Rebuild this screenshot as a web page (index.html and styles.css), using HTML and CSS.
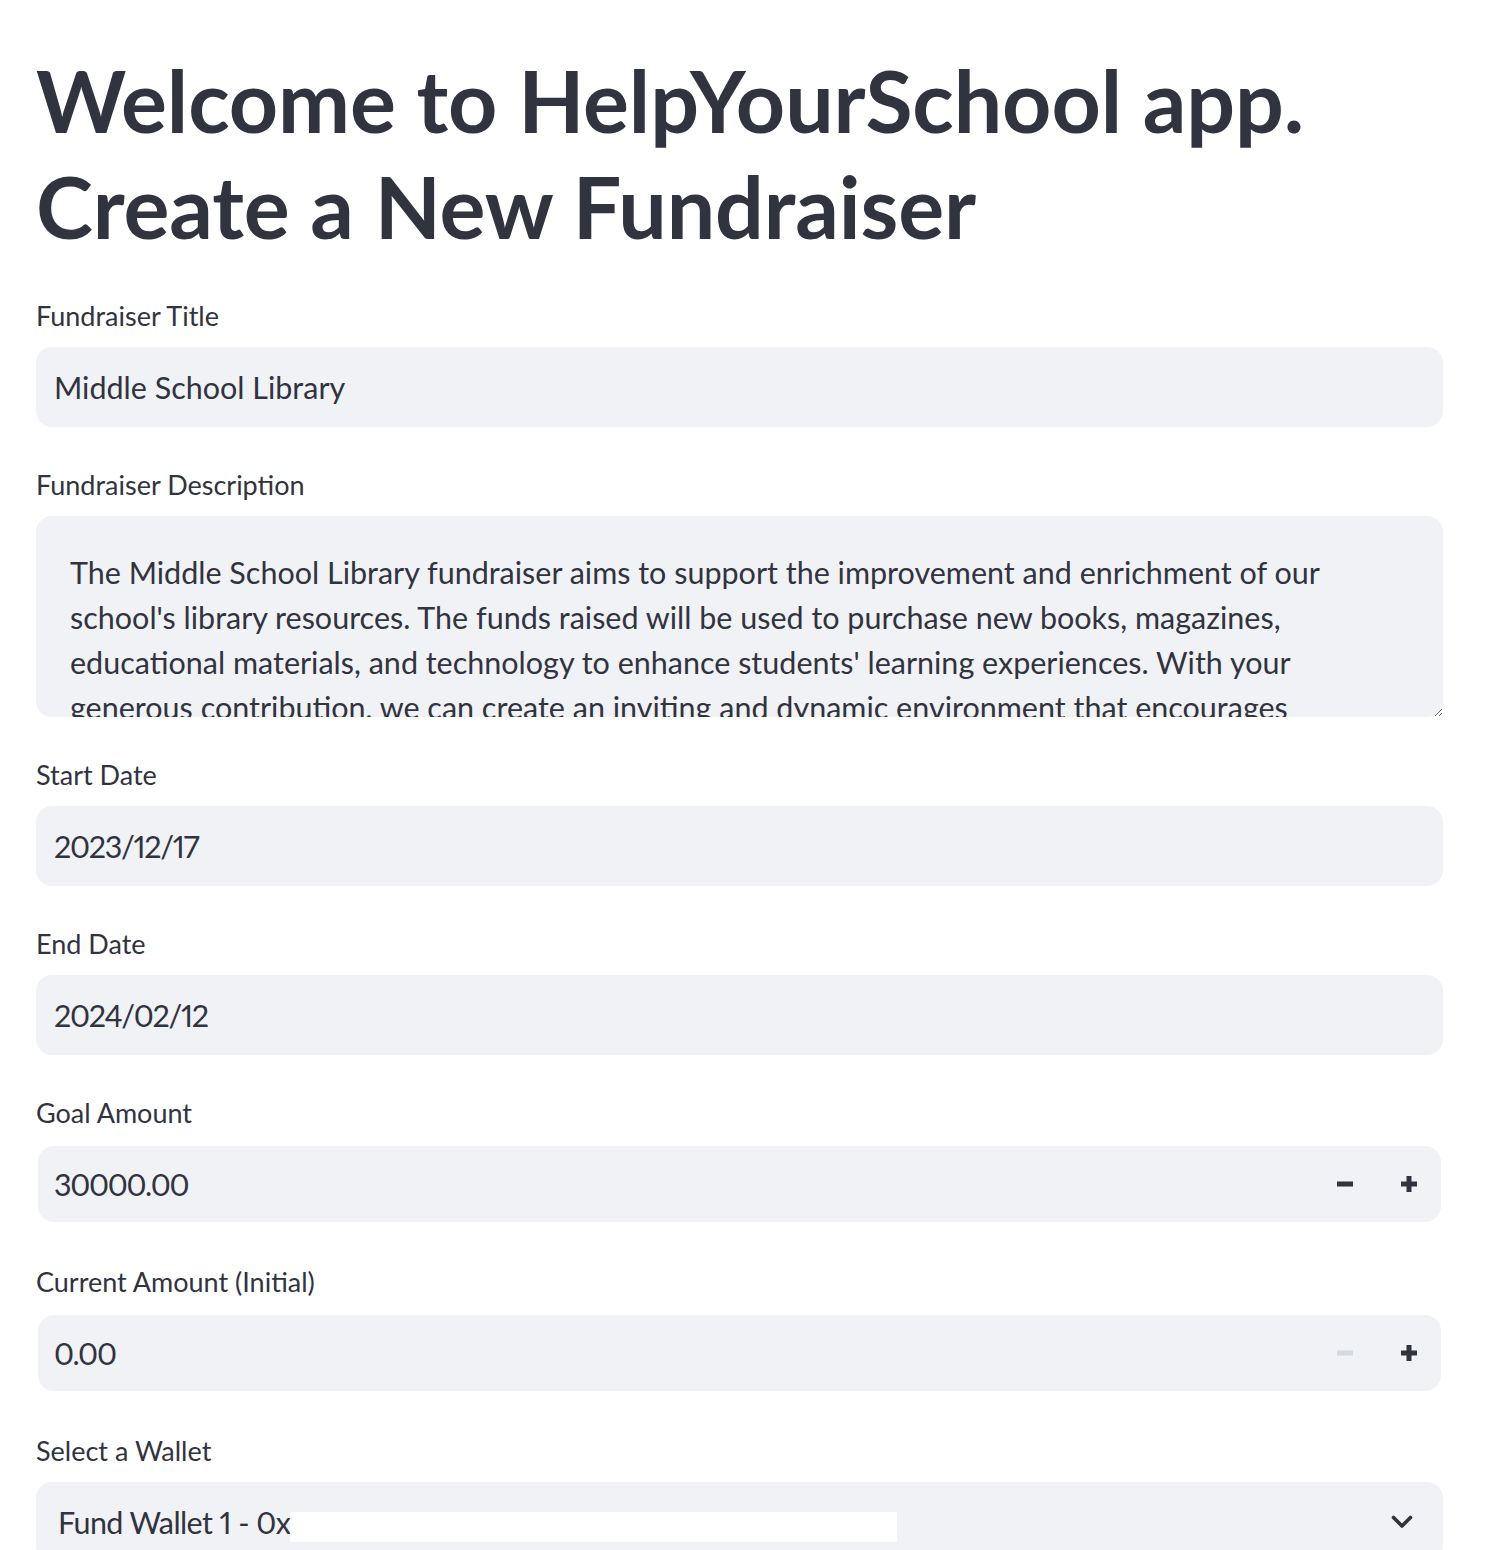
FILE: index.html
```html
<!DOCTYPE html>
<html lang="en">
  <head>
    <meta charset="UTF-8" />
    <meta name="viewport" content="width=device-width, initial-scale=1.0" />
    <title>HelpYourSchool - New Fundraiser</title>
    <link rel="stylesheet" href="styles.css">
  </head>
  <body>
    <div class="page">
      <h1 class="page-title">Welcome to HelpYourSchool app.<br>Create a New Fundraiser</h1>

      <div class="field">
        <label class="field-label" for="title">Fundraiser Title</label>
        <input class="text-input" id="title" type="text" value="Middle School Library">
      </div>

      <div class="field">
        <label class="field-label" for="desc">Fundraiser Description</label>
        <textarea class="text-area" id="desc">The Middle School Library fundraiser aims to support the improvement and enrichment of our school's library resources. The funds raised will be used to purchase new books, magazines, educational materials, and technology to enhance students' learning experiences. With your generous contribution, we can create an inviting and dynamic environment that encourages curiosity, creativity and a lifelong love of reading.</textarea>
      </div>

      <div class="field">
        <label class="field-label" for="start">Start Date</label>
        <input class="text-input digits" id="start" type="text" value="2023/12/17">
      </div>

      <div class="field">
        <label class="field-label" for="end">End Date</label>
        <input class="text-input digits" id="end" type="text" value="2024/02/12">
      </div>

      <div class="field">
        <label class="field-label" for="goal">Goal Amount</label>
        <div class="number-input">
          <input class="number-value digits" id="goal" type="text" value="30000.00">
          <button class="step-btn" type="button" aria-label="decrement">
            <svg width="16" height="16" viewBox="0 0 16 16"><rect x="0" y="5.5" width="16" height="5" /></svg>
          </button>
          <button class="step-btn" type="button" aria-label="increment">
            <svg width="16" height="16" viewBox="0 0 16 16"><rect x="0" y="5.5" width="16" height="5" /><rect x="5.5" y="0" width="5" height="16" /></svg>
          </button>
        </div>
      </div>

      <div class="field">
        <label class="field-label" for="current">Current Amount (Initial)</label>
        <div class="number-input">
          <input class="number-value digits" id="current" type="text" value="0.00">
          <button class="step-btn disabled" type="button" aria-label="decrement">
            <svg width="16" height="16" viewBox="0 0 16 16"><rect x="0" y="5.5" width="16" height="5" /></svg>
          </button>
          <button class="step-btn" type="button" aria-label="increment">
            <svg width="16" height="16" viewBox="0 0 16 16"><rect x="0" y="5.5" width="16" height="5" /><rect x="5.5" y="0" width="5" height="16" /></svg>
          </button>
        </div>
      </div>

      <div class="field">
        <label class="field-label">Select a Wallet</label>
        <div class="select-box">
          <span class="select-value"><span class="wallet-name">Fund Wallet 1 - 0x</span><span class="redacted"></span></span>
          <svg class="chevron" width="22" height="14" viewBox="0 0 22 14"><path d="M2.5 2.5 L11 11 L19.5 2.5" fill="none" stroke="#31333f" stroke-width="3.6" stroke-linecap="round" stroke-linejoin="round" /></svg>
        </div>
      </div>
    </div>
  </body>
</html>
```

FILE: styles.css
```css
* {
  box-sizing: border-box;
}

body {
  margin: 0;
  background: #ffffff;
  color: #31333f;
  font-family: "Lato", "Noto Sans", sans-serif;
}

.page {
  padding: 47px 43px 60px 36px;
}

.page-title {
  margin: 0 0 36px;
  font-size: 86px;
  font-weight: 700;
  line-height: 106px;
  letter-spacing: -0.1px;
  color: #31333f;
}

.field {
  display: flex;
  flex-direction: column;
  margin-bottom: 37px;
}

.field-label {
  font-size: 27px;
  line-height: 42px;
  margin-bottom: 10px;
}

.text-input {
  height: 80px;
  width: 100%;
  border: none;
  outline: none;
  border-radius: 16px;
  background: #f0f2f6;
  padding: 0 18px;
  font-family: inherit;
  font-size: 30.5px;
  color: #31333f;
}

.digits {
  font-variant-numeric: proportional-nums;
  letter-spacing: -1.3px;
}

.text-area {
  height: 201px;
  width: 100%;
  border: none;
  outline: none;
  border-radius: 16px;
  background: #f0f2f6;
  padding: 34px 34px 0;
  font-family: inherit;
  font-size: 30.5px;
  line-height: 45px;
  color: #31333f;
  overflow: hidden;
  resize: vertical;
}

.number-input {
  display: flex;
  align-items: center;
  height: 76px;
  margin: 2px 2px;
  border-radius: 16px;
  background: #f0f2f6;
}

.number-value {
  flex: 1;
  min-width: 0;
  height: 100%;
  border: none;
  outline: none;
  background: transparent;
  padding: 0 16px;
  font-family: inherit;
  font-size: 30.5px;
  color: #31333f;
}

.step-btn {
  width: 64px;
  height: 100%;
  border: none;
  background: transparent;
  padding: 0;
  display: flex;
  align-items: center;
  justify-content: center;
  cursor: pointer;
  fill: #31333f;
}

.step-btn.disabled {
  fill: #d5d9e0;
  cursor: default;
}

.select-box {
  display: flex;
  align-items: center;
  justify-content: space-between;
  height: 80px;
  border-radius: 16px;
  background: #f0f2f6;
  padding: 0 30px 0 22px;
  font-size: 30.5px;
}

.select-value {
  display: flex;
  align-items: center;
}

.wallet-name {
  font-variant-numeric: proportional-nums;
  letter-spacing: -0.6px;
}

.redacted {
  display: inline-block;
  width: 607px;
  height: 30px;
  margin-top: 10px;
  background: #ffffff;
}
```
